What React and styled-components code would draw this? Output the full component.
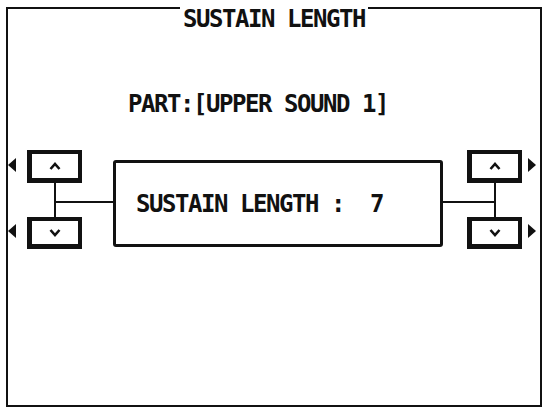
import styled, { createGlobalStyle } from "styled-components"

const Global = createGlobalStyle`
    html, body {
        margin: 0;
        padding: 0;
        background: #fff;
    }
    body {
        font-family: "DejaVu Sans Mono", "Liberation Mono", monospace;
        color: #111;
    }
`

const Frame = styled.div`
    box-sizing: border-box;
    width: 536px;
    height: 400px;
    margin: 7px 0 0 6px;
    border: 2px solid #111;
    display: flex;
    flex-direction: column;
`

const Lcd = styled.span`
    font-family: "DejaVu Sans Mono", "Liberation Mono", monospace;
    font-weight: bold;
    font-size: 24px;
    line-height: 20px;
    letter-spacing: -1.45px;
    white-space: pre;
    color: #111;
`

const TitleBar = styled.div`
    display: flex;
    justify-content: center;
    margin-top: -2px;
`

const Title = styled(Lcd)`
    display: inline-block;
    background: #fff;
    padding: 2px 3px 0 3px;
`

const PartLine = styled.div`
    margin-top: 65px;
    padding-left: 120px;
    height: 20px;
`

const Row = styled.div`
    margin-top: 36px;
    display: flex;
    align-items: flex-start;
`

const Group = styled.div`
    display: grid;
    grid-template-columns: ${({side}) => side === "left" ? "8px 11px 55px 31px" : "24px 55px 6px 8px 4px"};
    grid-template-rows: 33px 34px 32px;
`

const Arrow = styled.div`
    grid-column: ${({side}) => side === "left" ? 1 : 4};
    grid-row: ${({row}) => row};
    align-self: center;
    margin-top: -4px;
    width: 0;
    height: 0;
    border-top: 7px solid transparent;
    border-bottom: 7px solid transparent;
    ${({side}) => side === "left" ? "border-right: 8px solid #111;" : "border-left: 8px solid #111;"}
`

const StepButton = styled.div`
    grid-column: ${({side}) => side === "left" ? 3 : 2};
    grid-row: ${({row}) => row};
    box-sizing: border-box;
    border: 4px solid #111;
    border-left-width: 5px;
    border-bottom-width: 5px;
    background: #fff;
    display: flex;
    align-items: center;
    justify-content: center;
`

const Connector = styled.div`
    grid-column: ${({side}) => side === "left" ? "3 / 5" : "1 / 3"};
    grid-row: 2;
    display: flex;
    align-items: center;
    ${({side}) => side === "left"
        ? "margin-left: 27px; border-left: 2px solid #111;"
        : "margin-right: 26px; border-right: 2px solid #111;"}
`

const Branch = styled.div`
    flex: 1;
    margin-top: 3px;
    border-top: 2px solid #111;
`

const ValueBox = styled.div`
    box-sizing: border-box;
    width: 330px;
    height: 87px;
    margin-top: 10px;
    border: 3px solid #111;
    border-radius: 3px;
    display: flex;
    align-items: center;
    padding-left: 20px;
`

const Chevron = ({dir}) => (
    <svg width="12" height="8" viewBox="0 0 12 8">
        <polyline
            points={dir === "up" ? "1.5,7 6,2 10.5,7" : "1.5,1 6,6 10.5,1"}
            fill="none"
            stroke="#111"
            strokeWidth="2.6"
        />
    </svg>
)

const Controls = ({side}) => (
    <Group side={side}>
        <Arrow side={side} row={1} />
        <StepButton side={side} row={1}><Chevron dir="up" /></StepButton>
        <Connector side={side}><Branch /></Connector>
        <Arrow side={side} row={3} />
        <StepButton side={side} row={3}><Chevron dir="down" /></StepButton>
    </Group>
)

const App = () => {
    const part = "UPPER SOUND 1"
    const value = 7

    return <>
        <Global />
        <Frame>
            <TitleBar>
                <Title>SUSTAIN LENGTH</Title>
            </TitleBar>
            <PartLine>
                <Lcd>{`PART:[${part}]`}</Lcd>
            </PartLine>
            <Row>
                <Controls side="left" />
                <ValueBox>
                    <Lcd>{`SUSTAIN LENGTH :  ${value}`}</Lcd>
                </ValueBox>
                <Controls side="right" />
            </Row>
        </Frame>
    </>
}

export default App
